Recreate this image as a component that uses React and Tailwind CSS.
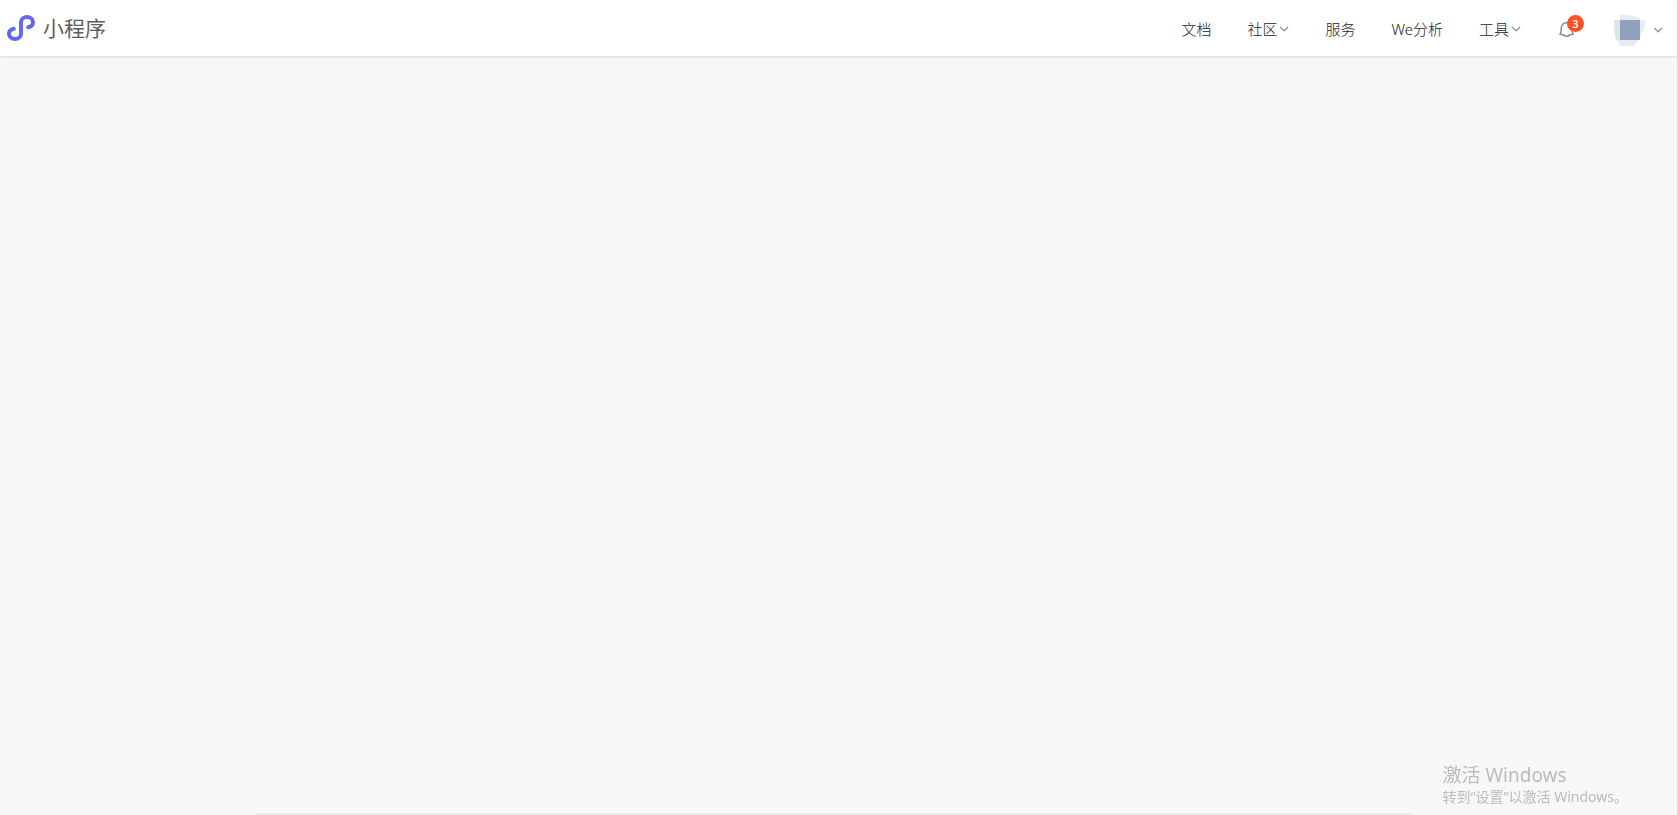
import React from 'react';

const navItems = [
  { label: '文档', menu: false },
  { label: '社区', menu: true },
  { label: '服务', menu: false },
  { label: 'We分析', menu: false },
  { label: '工具', menu: true },
];

const Arrow = () => (
  <svg className="w-[10px] h-[8px]" viewBox="0 0 10 8" fill="none" stroke="#959595" strokeWidth="1.5">
    <path d="M1.400 2l3.800 3.800L9 2" />
  </svg>
);

const Logo = () => (
  <svg className="w-[28px] h-[28px]" viewBox="0 0 28 28" fill="none" stroke="#6467f0" strokeWidth="4" strokeLinecap="round">
    <path d="M21.2 13.2C24 12.6 26 10.6 26 8.2C26 5.2 23.2 3 20 3C16.800 3 14 5.200 14 8.200V19.800C14 22.800 11.200 25 8 25C4.800 25 2 22.800 2 19.800C2 17.400 4 15.400 6.800 14.800" />
  </svg>
);

const Header = () => {
  return (
    <header className="flex items-center justify-between h-14 pl-[7px] pr-[14px] bg-white shadow-[0_1px_2px_rgba(0,0,0,0.12)]">
      <a href="#home" className="flex items-center gap-2">
        <Logo />
        <span className="text-[21px] leading-7 text-[#5e5e5e]">小程序</span>
      </a>

      <div className="flex items-center">
        <nav className="flex items-center gap-9 pt-[2px] text-[15px] leading-6 font-light text-[#1c1c1c]">
          {navItems.map((item) =>
            item.menu ? (
              <button key={item.label} type="button" className="flex items-center gap-0.5 cursor-pointer">
                {item.label}
                <Arrow />
              </button>
            ) : (
              <a key={item.label} href="#nav">
                {item.label}
              </a>
            )
          )}
        </nav>

        {/* Notifications */}
        <button type="button" aria-label="通知" className="relative ml-[38px] mt-[2px] cursor-pointer">
          <svg className="w-[16px] h-[18px]" viewBox="0 0 16 18" fill="none" stroke="#8f8f8f" strokeWidth="1.6" strokeLinejoin="round">
            <path d="M1 14.200C2.200 12.600 2.300 11 2.300 8.500C2.300 5 4.600 2.600 7.600 2.600S12.900 5 12.900 8.500C12.900 11 13 12.600 14.200 14.200Q12 14.400 10.800 15Q7.600 17.400 4.400 15Q3 14.400 1 14.200Z" />
          </svg>
          <span className="absolute -top-[5px] left-[8px] flex items-center justify-center w-[17px] h-[17px] rounded-full bg-[#fd4f22] text-[11px] leading-none font-semibold text-white">
            3
          </span>
        </button>

        {/* Account */}
        <button type="button" aria-label="账号" className="flex items-center gap-[7px] ml-[39px] mt-[4px] cursor-pointer">
          <svg className="w-8 h-8" viewBox="0 0 32 32">
            <path d="M6 0L20 2L26 4V6H31V11L29 17L26 22L23 28L20 32H6V30L3 27L1 22L0 17V6H6Z" fill="#e9ebf1" />
            <path d="M0 6H6V26H2L1 21Z" fill="#e0e3eb" />
            <path d="M6 6H26V26H6Z" fill="#909fbc" />
          </svg>
          <Arrow />
        </button>
      </div>
    </header>
  );
};

const App = () => {
  return (
    <div className="flex flex-col min-h-screen bg-[#f6f7f9] border-r border-[#d9dadc] font-['Noto_Sans','Noto_Sans_CJK_SC',sans-serif]">
      <Header />

      <main className="flex flex-col flex-1 justify-end pl-64 pr-66">
        <div className="border-t-2 border-[#ececee]" />
      </main>

      {/* Activation notice */}
      <div className="fixed right-[50px] bottom-2 text-[#b9bbbd] pointer-events-none">
        <p className="text-[19px] leading-6">激活 Windows</p>
        <p className="text-sm leading-5">转到“设置”以激活 Windows。</p>
      </div>
    </div>
  );
};

export default App;
